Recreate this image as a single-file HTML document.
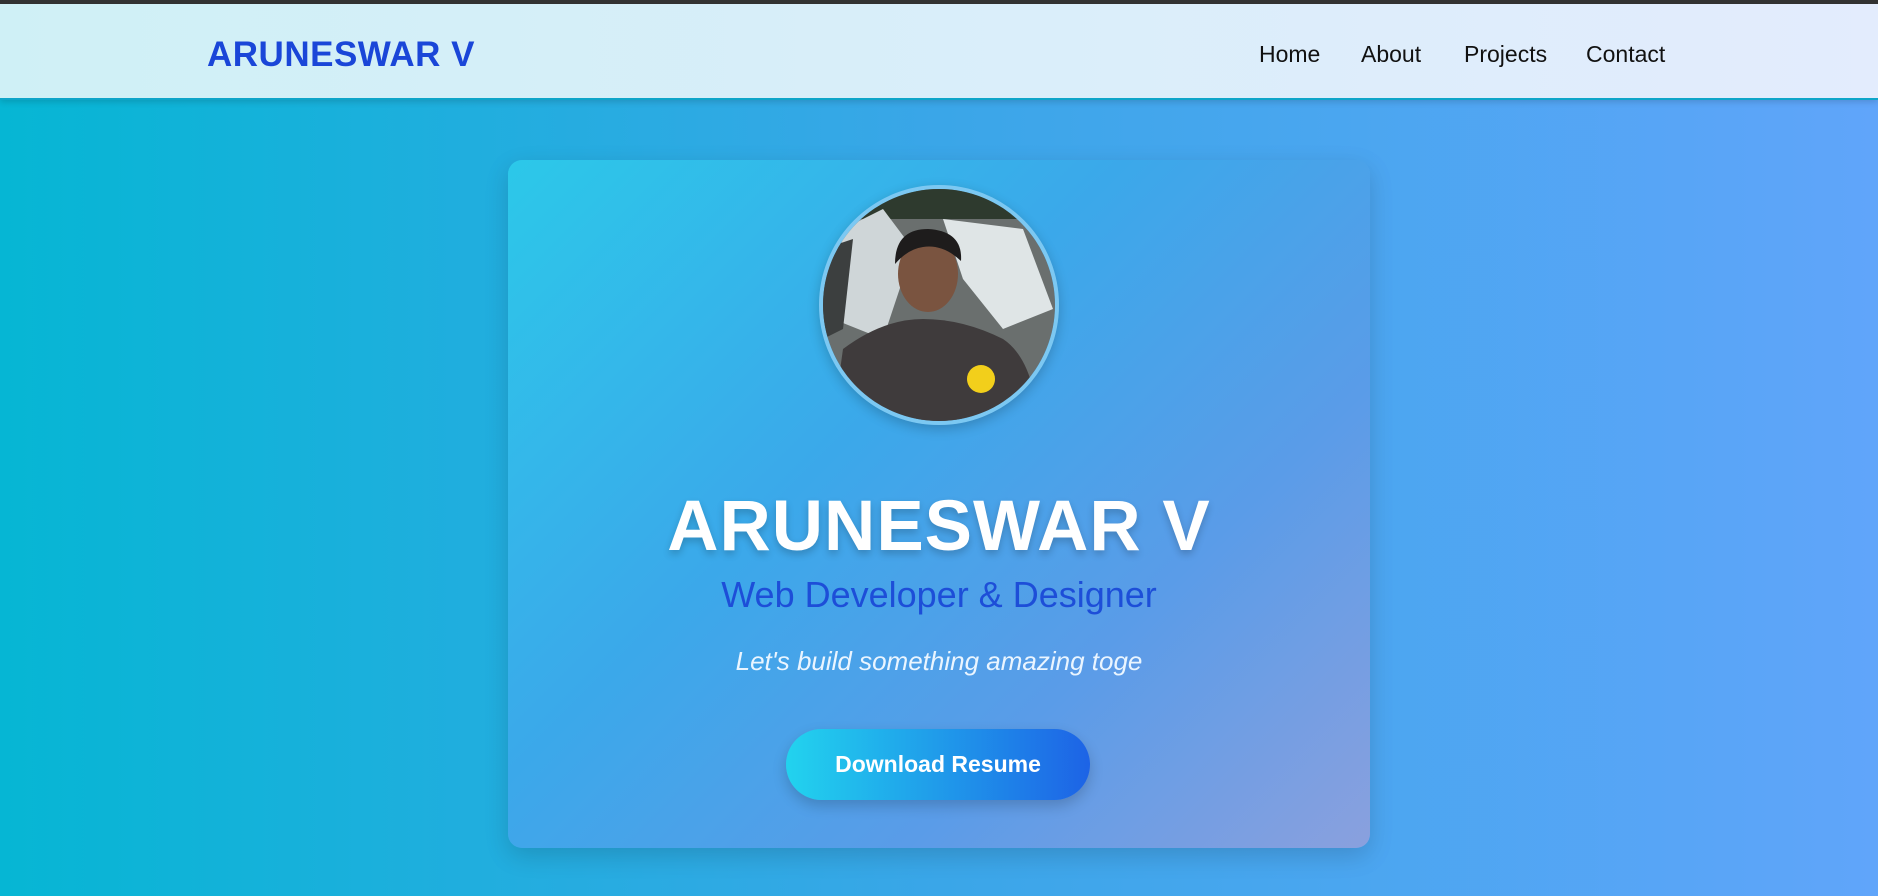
<!DOCTYPE html>
<html><head><meta charset="utf-8"><style>
*{margin:0;padding:0;box-sizing:border-box}
html,body{width:1878px;height:896px;overflow:hidden}
body{font-family:"Liberation Sans",sans-serif;background:linear-gradient(90deg,#06b6d4 0%,#3aa6e8 50%,#60a5fa 100%);position:relative}
.top{position:absolute;left:0;top:0;width:1878px;height:4px;background:#333}
nav{position:absolute;left:0;top:4px;width:1878px;height:96px;background:linear-gradient(90deg,#cff0f6,#e3ecfd);border-bottom:2px solid #0ea5c9;box-shadow:0 2px 6px rgba(0,0,0,.15)}
.logo{position:absolute;left:207px;top:31px;font-size:35px;font-weight:bold;color:#1a46d8;letter-spacing:.5px}
.links a{position:absolute;top:37px;font-size:23px;color:#111;text-decoration:none}
.card{position:absolute;left:508px;top:160px;width:862px;height:688px;border-radius:14px;background:linear-gradient(135deg,#2cc8e9 0%,#3ba8ea 40%,#5a9ce8 70%,#8aa0de 100%);box-shadow:0 8px 24px rgba(0,0,0,.15)}
.photo{position:absolute;left:819px;top:185px;width:240px;height:240px;border-radius:50%;border:4px solid #7cc8f2;overflow:hidden;box-shadow:0 4px 12px rgba(0,0,0,.2)}
h1{position:absolute;left:508px;width:862px;top:486px;text-align:center;color:#fff;font-size:71px;font-weight:900;letter-spacing:1px;text-shadow:0 4px 8px rgba(0,0,0,.2)}
.sub{position:absolute;left:508px;width:862px;top:574px;text-align:center;color:#1d4ed8;font-size:36px}
.tag{position:absolute;left:508px;width:862px;top:646px;text-align:center;color:#eaf5ff;font-size:26px;font-style:italic}
.btn{position:absolute;left:786px;top:729px;width:304px;height:71px;border-radius:36px;background:linear-gradient(90deg,#22d3ee,#1d63e6);color:#fff;font-weight:bold;font-size:23px;text-align:center;line-height:71px;box-shadow:0 6px 14px rgba(0,0,0,.18)}
</style></head><body>
<div class="top"></div>
<nav><div class="logo">ARUNESWAR V</div>
<div class="links"><a style="left:1259px">Home</a><a style="left:1361px">About</a><a style="left:1464px">Projects</a><a style="left:1586px">Contact</a></div></nav>
<div class="card"></div>
<div class="photo"><svg width="232" height="232" viewBox="0 0 232 232">
<rect width="232" height="232" fill="#6a6f6e"/>
<rect x="0" y="0" width="232" height="30" fill="#2e3a2e"/>
<path d="M20 40 L60 20 L90 60 L60 150 L10 130Z" fill="#cfd6d8"/>
<path d="M120 30 L200 40 L230 120 L180 140 L140 90Z" fill="#dfe5e6"/>
<path d="M0 60 L30 50 L20 140 L0 150Z" fill="#3c3f3f"/>
<path d="M10 232 L20 160 Q60 130 100 130 Q140 130 180 150 Q210 170 215 232Z" fill="#3f3b3c"/>
<ellipse cx="105" cy="85" rx="30" ry="38" fill="#7a5440"/>
<path d="M72 75 Q72 40 105 40 Q140 42 138 72 Q120 55 100 58 Q85 60 72 75Z" fill="#1e1c1c"/>
<circle cx="158" cy="190" r="14" fill="#f2cf1b"/>
</svg></div>
<h1>ARUNESWAR V</h1>
<div class="sub">Web Developer &amp; Designer</div>
<div class="tag">Let's build something amazing toge</div>
<div class="btn">Download Resume</div>
</body></html>
